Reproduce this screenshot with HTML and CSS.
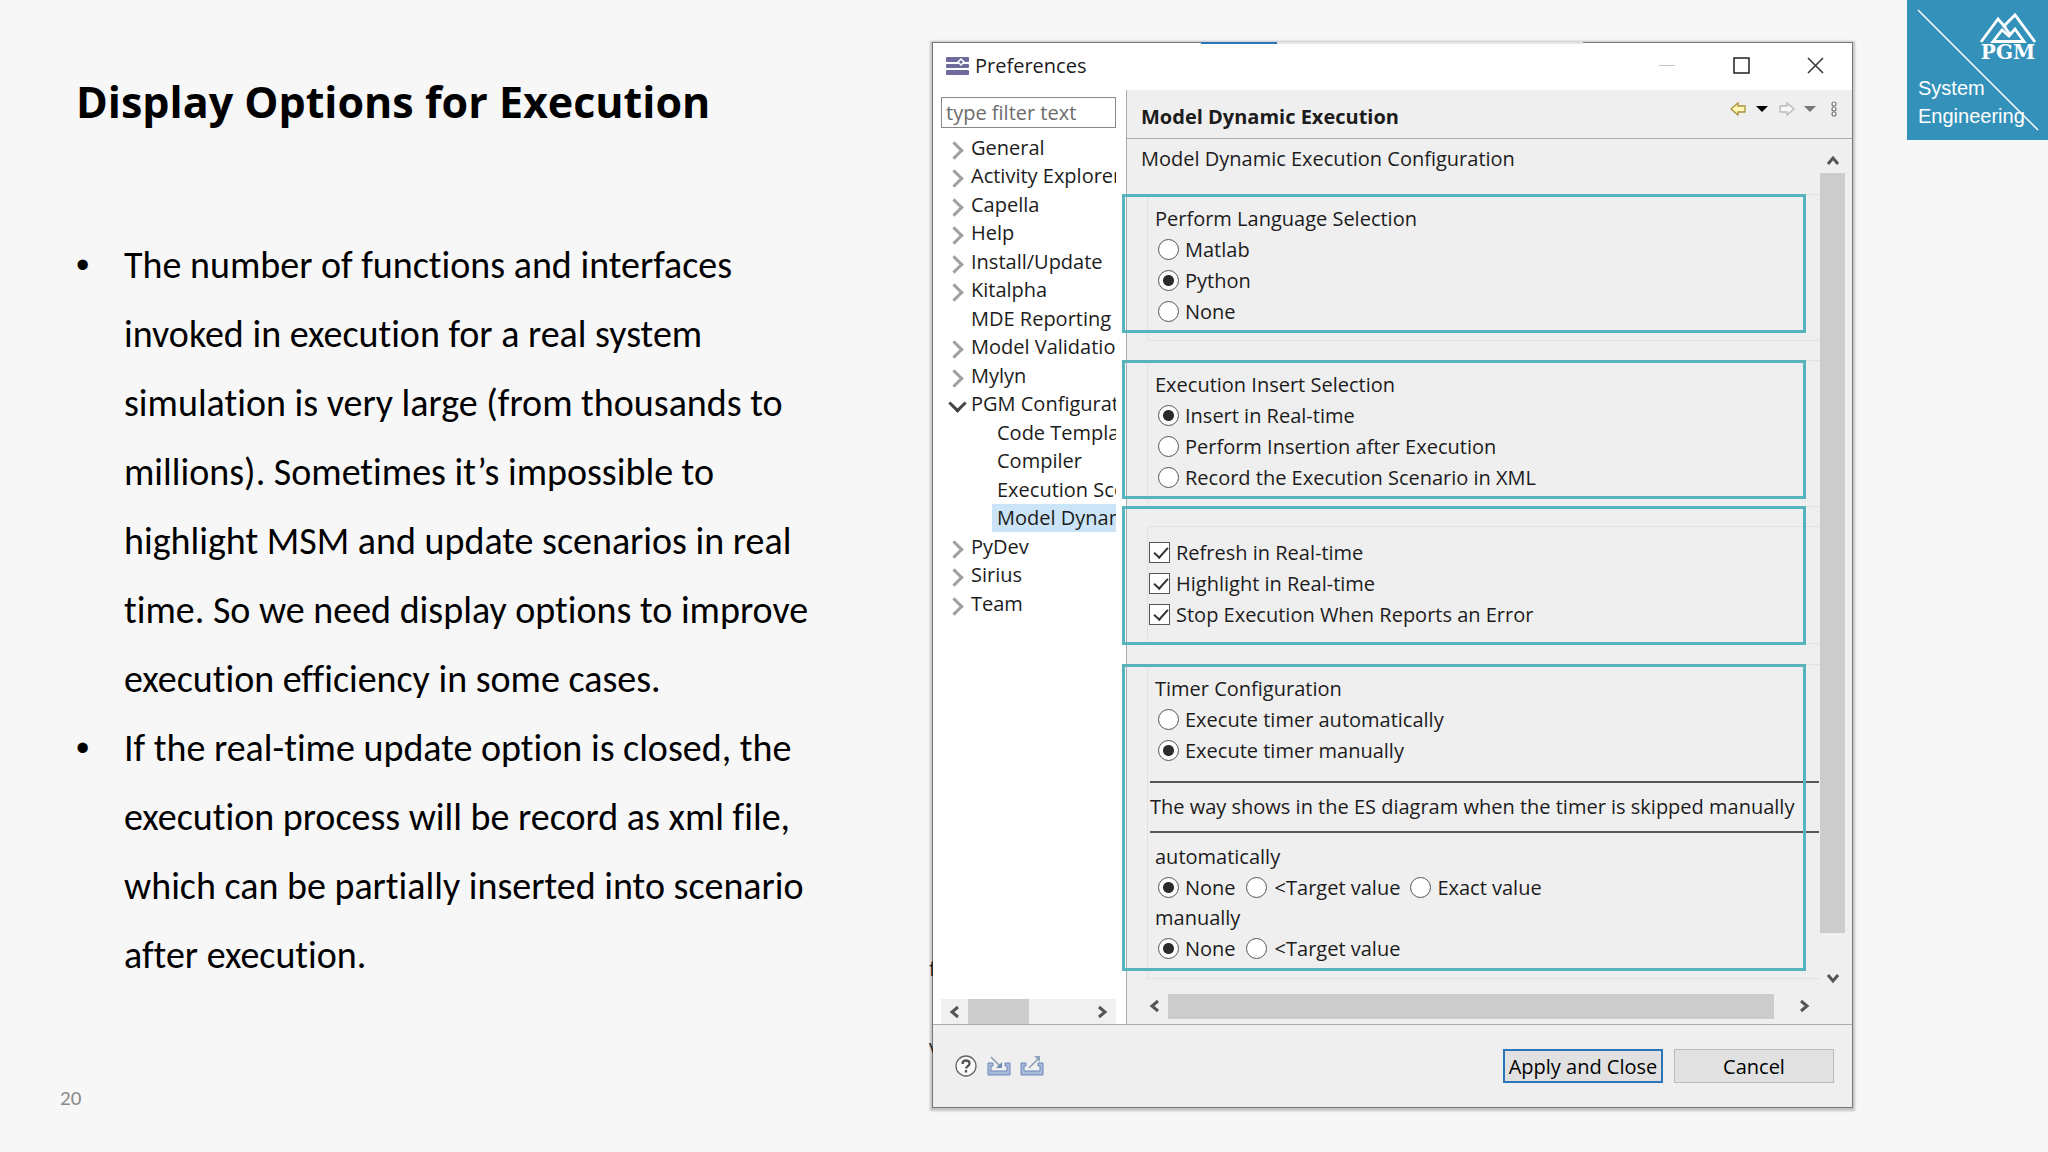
FILE: index.html
```html
<!DOCTYPE html>
<html lang="en">
<head>
	<meta charset="UTF-8">
	<title>Display Options for Execution</title>
	<link rel="stylesheet" href="styles.css">
</head>
<body>
	<div class="slide">
		<div class="intro">
			<h1>Display Options for Execution</h1>
			<ul class="points">
				<li>The number of functions and interfaces invoked in execution for a real system simulation is very large (from thousands to millions). Sometimes it’s impossible to highlight MSM and update scenarios in real time. So we need display options to improve execution efficiency in some cases.</li>
				<li>If the real-time update option is closed, the execution process will be record as xml file, which can be partially inserted into scenario after execution.</li>
			</ul>
			<div class="pageNo">20</div>
		</div>

		<div class="dialog">
			<span class="tab"></span>
			<span class="behind behind1">f</span>
			<span class="behind behind2">v</span>
			<div class="titleBar">
				<svg class="appIcon" width="24" height="20" viewBox="0 0 24 20">
					<g fill="#6f6a9c">
						<rect x="0" y="1" width="23" height="5" rx="1"/>
						<rect x="0" y="8" width="23" height="4" rx="1"/>
						<rect x="0" y="14" width="23" height="5" rx="1"/>
					</g>
					<path d="M15 3l3 3-3 3-3-3z" fill="#6f6a9c" stroke="#fff" stroke-width="1.5"/>
				</svg>
				<span class="name">Preferences</span>
				<button class="winBtn" aria-label="Minimize"><svg width="17" height="17"><path d="M0 8.5h16" stroke="#c4c4c4"/></svg></button>
				<button class="winBtn" aria-label="Maximize"><svg width="17" height="17"><path d="M1 1h15v15h-15z" fill="none" stroke="#222" stroke-width="1.5"/></svg></button>
				<button class="winBtn" aria-label="Close"><svg width="17" height="17"><path d="M1 1l15 15M16 1l-15 15" stroke="#333" stroke-width="1.5"/></svg></button>
			</div>

			<div class="main">
				<div class="side">
					<input class="filter" type="text" placeholder="type filter text" aria-label="Filter">
					<ul class="tree">
						<li class="closed">General</li>
						<li class="closed">Activity Explorer</li>
						<li class="closed">Capella</li>
						<li class="closed">Help</li>
						<li class="closed">Install/Update</li>
						<li class="closed">Kitalpha</li>
						<li>MDE Reporting</li>
						<li class="closed">Model Validation</li>
						<li class="closed">Mylyn</li>
						<li class="open">PGM Configuration</li>
						<li class="child">Code Template</li>
						<li class="child">Compiler</li>
						<li class="child">Execution Scenario</li>
						<li class="child"><span class="select">Model Dynamic Execution</span></li>
						<li class="closed">PyDev</li>
						<li class="closed">Sirius</li>
						<li class="closed">Team</li>
					</ul>
					<div class="hbar sideBar">
						<svg width="11" height="14"><path d="M9 2l-6 5 6 5" class="chev"/></svg>
						<span class="thumb"></span>
						<svg width="11" height="14"><path d="M2 2l6 5-6 5" class="chev"/></svg>
					</div>
				</div>

				<div class="page">
					<div class="pageHead">
						<h2>Model Dynamic Execution</h2>
						<svg class="nav" width="110" height="20" viewBox="0 0 110 20">
							<path d="M1 8l7-6v3h7v6h-7v3z" fill="#fff6b8" stroke="#a8923a" stroke-width="1.3"/>
							<path d="M26 5h12l-6 6z" fill="#000"/>
							<path d="M64 8l-7-6v3h-7v6h7v3z" fill="#f7f7f7" stroke="#b9b9b9" stroke-width="1.3"/>
							<path d="M74 5h12l-6 6z" fill="#777"/>
							<g fill="#fff" stroke="#777" stroke-width="1.2">
								<circle cx="104" cy="3" r="2"/>
								<circle cx="104" cy="8" r="2"/>
								<circle cx="104" cy="13" r="2"/>
							</g>
						</svg>
					</div>
					<div class="scroll">
						<form class="content" id="prefs">
							<p class="desc">Model Dynamic Execution Configuration</p>
							<div class="group language">
								<p>Perform Language Selection</p>
								<label><input type="radio" name="lang">Matlab</label>
								<label><input type="radio" name="lang" checked>Python</label>
								<label><input type="radio" name="lang">None</label>
							</div>
							<div class="group insert">
								<p>Execution Insert Selection</p>
								<label><input type="radio" name="insert" checked>Insert in Real-time</label>
								<label><input type="radio" name="insert">Perform Insertion after Execution</label>
								<label><input type="radio" name="insert">Record the Execution Scenario in XML</label>
							</div>
							<div class="group checks">
								<label><input type="checkbox" checked>Refresh in Real-time</label>
								<label><input type="checkbox" checked>Highlight in Real-time</label>
								<label><input type="checkbox" checked>Stop Execution When Reports an Error</label>
							</div>
							<div class="group timer">
								<p>Timer Configuration</p>
								<label><input type="radio" name="timer">Execute timer automatically</label>
								<label><input type="radio" name="timer" checked>Execute timer manually</label>
								<div class="note">The way shows in the ES diagram when the timer is skipped manually</div>
								<p>automatically</p>
								<div class="line">
									<label><input type="radio" name="auto" checked>None</label>
									<label class="target"><input type="radio" name="auto">&lt;Target value</label>
									<label><input type="radio" name="auto">Exact value</label>
								</div>
								<p>manually</p>
								<div class="line">
									<label><input type="radio" name="manual" checked>None</label>
									<label class="target"><input type="radio" name="manual">&lt;Target value</label>
								</div>
							</div>
						</form>
						<div class="vbar">
							<svg width="14" height="11"><path d="M2 9l5-6 5 6" class="chev"/></svg>
							<span class="thumb"></span>
							<svg width="14" height="11"><path d="M2 2l5 6 5-6" class="chev"/></svg>
						</div>
					</div>
					<div class="hbar pageBar">
						<svg width="11" height="14"><path d="M9 2l-6 5 6 5" class="chev"/></svg>
						<span class="thumb"></span>
						<svg width="11" height="14"><path d="M2 2l6 5-6 5" class="chev"/></svg>
					</div>
				</div>
			</div>

			<div class="footer">
				<button class="icon" aria-label="Help">
					<svg width="22" height="22"><circle cx="11" cy="11" r="10" fill="#fafafa" stroke="#666" stroke-width="1.3"/><path d="M7.500 9q0-3.500 3.500-3.500t3.500 3q0 1.500-1.500 2.500t-2 2.500M11 15v2.500" fill="none" stroke="#555" stroke-width="2.300"/></svg>
				</button>
				<button class="icon" aria-label="Import">
					<svg width="24" height="20" viewBox="0 0 24 20"><path d="M1 7h5v3h-2v5h16v-5h-2v-3h5v12h-22z" fill="#a9bbdc" stroke="#6c86b8"/><path d="M4 1l9 9" stroke="#8799ad" stroke-width="1.500"/><path d="M15 12h-6l6-6z" fill="#6f8db0"/></svg>
				</button>
				<button class="icon" aria-label="Export">
					<svg width="24" height="20" viewBox="0 0 24 20"><path d="M1 7h5v3h-2v5h16v-5h-2v-3h5v12h-22z" fill="#a9bbdc" stroke="#6c86b8"/><path d="M9 12l9-9" stroke="#8799ad" stroke-width="1.500"/><path d="M20 0v6l-6-6z" fill="#8ea3bd"/></svg>
				</button>
				<button class="btn apply">Apply and Close</button>
				<button class="btn">Cancel</button>
			</div>
		</div>

		<div class="brand">
			<svg class="slash" width="141" height="140" viewBox="0 0 141 140"><path d="M11 10l120 120" stroke="#fff" stroke-width="1.500"/></svg>
			<div class="mark">
				<svg width="58" height="31" viewBox="0 0 58 31">
					<g fill="none" stroke="#fff" stroke-width="2.800">
						<path d="M2 30L19 7l8 9M25 14L36 3l20 27"/>
						<path d="M14 29.500L23 18l7 6 6-7 9 12.500z"/>
						<path d="M24 13l7 9"/>
					</g>
				</svg>
				<b>PGM</b>
			</div>
			<div class="team">System<br>Engineering</div>
		</div>
	</div>
</body>
</html>
```
FILE: styles.css
```css
*{
	margin: 0;
	padding: 0;
	box-sizing: border-box;
}
body{
	background: #f7f7f8;
	color: #000;
	font-family: "Open Sans", "Noto Sans", sans-serif;
}
ul{
	list-style: none;
}
button{
	border: none;
	background: none;
	font: inherit;
}
.slide{
	display: grid;
	grid-template-columns: 932fr 921fr 195fr;
	min-height: 100vh;
}

/* left text */
.intro{
	display: flex;
	flex-direction: column;
	padding: 72px 96px 38px 76px;
}
.intro h1{
	font-size: 43px;
	line-height: 60px;
}
.points{
	margin-top: 99px;
	font-family: Carlito, Lato, sans-serif;
	font-size: 38px;
	font-variant-ligatures: none;
	line-height: 69px;
}
.points li{
	position: relative;
	padding-left: 48px;
}
.points li::before{
	content: "•";
	position: absolute;
	left: 0;
	font-family: "Liberation Sans", Arial, sans-serif;
}
.pageNo{
	margin-top: auto;
	margin-left: -16px;
	color: #8a8a8a;
	font-family: Carlito, Lato, sans-serif;
	font-size: 21px;
	line-height: 32px;
}

/* preferences window */
.dialog{
	position: relative;
	display: flex;
	flex-direction: column;
	margin: 42px 0 44px;
	border: 1px solid #777;
	background: #f0eff0;
	box-shadow: 0 1px 2px 2px #c4c4c4;
	color: #1c1c1c;
	font-size: 20px;
}
.tab{
	position: absolute;
	top: -1px;
	left: 268px;
	width: 382px;
	height: 2px;
	border-left: 76px solid #2a76b8;
	background: #e6e6ea;
}
.behind{
	position: absolute;
	left: -4px;
	width: 4px;
	overflow: hidden;
	line-height: 24px;
}
.behind1{
	top: 914px;
}
.behind2{
	top: 992px;
}
.titleBar{
	display: flex;
	align-items: center;
	height: 47px;
	padding: 0 0 2px 13px;
	background: #fff;
}
.titleBar .name{
	flex: 1;
	margin-left: 5px;
}
.winBtn{
	width: 74px;
	height: 44px;
}
.winBtn svg{
	display: block;
	margin: 0 auto;
}
.main{
	display: flex;
	flex: 1;
	border-bottom: 1px solid #aaa;
}
.side{
	display: flex;
	flex-direction: column;
	width: 194px;
	padding: 7px 10px 0 8px;
	background: #fff;
	border-right: 1px solid #aaa;
}
.filter{
	width: 100%;
	height: 31px;
	padding: 0 4px;
	border: 1px solid #888;
	font: inherit;
}
.filter::placeholder{
	color: #6c6c6c;
}
.tree{
	flex: 1;
	padding-top: 6px;
	overflow: hidden;
	white-space: nowrap;
}
.tree li{
	position: relative;
	height: 28px;
	padding-left: 30px;
	line-height: 28px;
}
.tree li:nth-child(even){
	height: 29px;
}
.closed::before, .open::before{
	content: "";
	position: absolute;
	top: 10px;
	left: 7px;
	width: 10px;
	height: 10px;
	border: solid #a0a0a0;
	border-width: 3px 3px 0 0;
	transform: rotate(45deg);
}
.open::before{
	top: 7px;
	left: 10px;
	border-color: #444;
	transform: rotate(135deg);
}
.tree .child{
	padding-left: 51px;
}
.select{
	display: block;
	padding-left: 5px;
	background: #cce4f7;
}
.tree .child:not(:has(.select)){
	padding-left: 56px;
}
.hbar{
	display: flex;
	align-items: center;
	height: 25px;
	padding: 0 8px;
}
.chev{
	fill: none;
	stroke: #555;
	stroke-width: 3;
}
.thumb{
	background: #cdcccd;
}
.sideBar{
	background: #f0f0f0;
}
.sideBar .thumb{
	width: 61px;
	height: 25px;
	margin: 0 auto 0 8px;
}

/* right part of the window */
.page{
	display: flex;
	flex: 1;
	flex-direction: column;
	min-width: 0;
}
.pageHead{
	display: flex;
	justify-content: space-between;
	height: 49px;
	padding: 11px 12px 0 14px;
	border-bottom: 1px solid #aaa;
}
.pageHead h2{
	font-size: 20px;
	line-height: 32px;
}
.scroll{
	display: flex;
	flex: 1;
}
.content{
	flex: 1;
	padding-left: 14px;
	padding-bottom: 14px;
}
.desc{
	margin-bottom: 16px;
	line-height: 39px;
}
.group{
	position: relative;
	margin: 0 0 19px 6px;
	padding: 9px 0 13px 7px;
	border: 1px solid #e2e2e2;
	border-right: none;
	line-height: 30px;
}
.group label{
	display: flex;
	align-items: center;
	height: 31px;
	padding-left: 3px;
}
.group input{
	appearance: none;
	width: 21px;
	height: 21px;
	margin-right: 6px;
	border: 1px solid #555;
	border-radius: 50%;
	background: #fff;
}
.group input[type=radio]:checked{
	background: radial-gradient(#2c2c2c 5px, #fff 6px);
}
.group input[type=checkbox]{
	position: relative;
	border-radius: 0;
}
.group input[type=checkbox]::after{
	content: "";
	position: absolute;
	top: 1px;
	left: 7px;
	width: 6px;
	height: 12px;
	border: solid #333;
	border-width: 0 2px 2px 0;
	transform: rotate(42deg);
}
/* teal frames round each block */
.group::after{
	content: "";
	position: absolute;
	top: -1px;
	right: 14px;
	bottom: 7px;
	left: -26px;
	border: 3px solid #58b4bb;
	pointer-events: none;
}
.checks{
	margin-bottom: 20px;
	padding: 10px 0 13px;
}
.checks::after{
	top: -21px;
	bottom: -2px;
}
.checks label{
	padding-left: 1px;
}
.timer{
	margin-bottom: 0;
	padding-bottom: 14px;
}
.note{
	height: 52px;
	margin: 15px 1px 9px -5px;
	border: solid #555;
	border-width: 2px 0;
	line-height: 48px;
	white-space: nowrap;
}
.line{
	display: flex;
}
.line label{
	margin-right: 7px;
}
.line .target input{
	margin-right: 8px;
}
.vbar{
	display: flex;
	flex-direction: column;
	align-items: center;
	width: 25px;
	margin-right: 7px;
	padding: 16px 0 9px;
}
.vbar .thumb{
	flex: 1;
	width: 25px;
	margin: 7px 0 40px;
}
.pageBar{
	height: 26px;
	margin: 0 34px 5px 14px;
	justify-content: space-between;
}
.pageBar .thumb{
	flex: 1;
	height: 25px;
	margin: 0 25px 0 8px;
}

.footer{
	display: flex;
	align-items: center;
	height: 82px;
	padding: 0 18px 0 22px;
}
.icon{
	width: 22px;
	height: 22px;
	margin-right: 10px;
}
.icon + .icon{
	width: 24px;
	margin-right: 9px;
}
.icon svg{
	display: block;
}
.btn{
	width: 160px;
	height: 34px;
	border: 1px solid #bbb;
	background: #e1e1e2;
	white-space: nowrap;
}
.apply{
	margin: 0 11px 0 auto;
	border: 2px solid #2a76b8;
}

/* corner logo */
.brand{
	position: relative;
	display: flex;
	flex-direction: column;
	justify-self: end;
	width: 141px;
	height: 140px;
	padding: 12px 11px 10px 11px;
	background: #3492ba;
	color: #fff;
}
.slash{
	position: absolute;
	top: 0;
	left: 0;
}
.mark{
	align-self: flex-end;
	width: 58px;
	text-align: center;
}
.mark svg{
	display: block;
}
.mark b{
	display: block;
	font-family: "DejaVu Serif", serif;
	font-size: 20px;
	line-height: 18px;
}
.team{
	margin-top: 13px;
	font-family: "Liberation Sans", Arial, sans-serif;
	font-size: 20px;
	line-height: 28px;
}
```
